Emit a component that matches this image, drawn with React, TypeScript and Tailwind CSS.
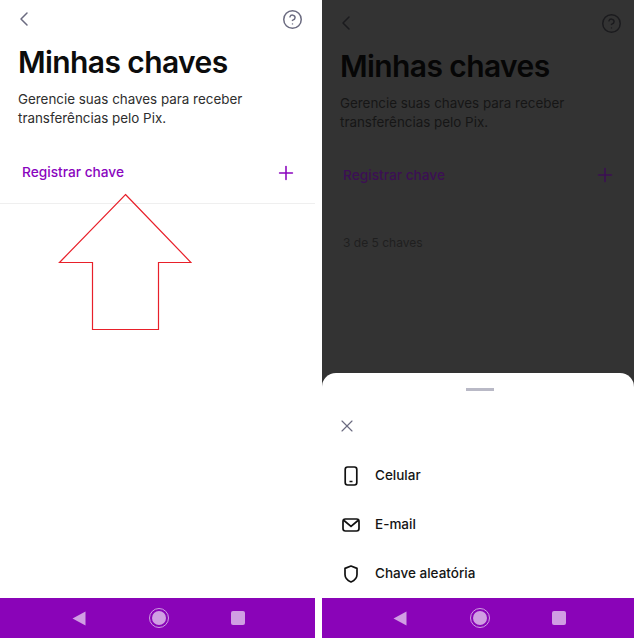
import { ChevronLeft, CircleHelp, Plus, X } from "lucide-react";

function NavBar() {
  return (
    <div className="flex h-[40px] shrink-0 items-center justify-center gap-[62px] bg-[#8a04b8] pl-[3px]">
      <svg width="14" height="15" viewBox="0 0 14 15" className="-ml-[1px] mr-[1px]">
        <path d="M13.5 0.5v14L0.5 7.5z" fill="#d09ee3" />
      </svg>
      <div className="flex size-[20px] items-center justify-center rounded-full border border-[#d09ee3]">
        <div className="size-[14px] rounded-full bg-[#d09ee3]" />
      </div>
      <div className="size-[14px] rounded-[2px] bg-[#d09ee3]" />
    </div>
  );
}

function Header({ dark }: { dark?: boolean }) {
  const icon = dark ? "#1b1b1e" : "#6b6b80";
  return (
    <div className={dark ? "px-[18px] pt-[16px]" : "px-[18px] pt-[12px]"}>
      <div className="flex h-[14px] items-center justify-between">
        <ChevronLeft size={24} strokeWidth={1.5} color={icon} className="-ml-[6px]" />
        <CircleHelp size={21} strokeWidth={1.7} color={icon} className="-mr-[6px]" />
      </div>
      <h1
        className={
          "mt-[14px] text-[30px] leading-[44px] font-semibold tracking-[-0.6px] " +
          (dark ? "text-[#060606]" : "text-[#0c0c0c]")
        }
      >
        Minhas chaves
      </h1>
      <p
        className={
          "mt-[6px] text-[13.4px] leading-[19px] " +
          (dark ? "text-[#161616]" : "text-[#2e2e2e]")
        }
      >
        Gerencie suas chaves para receber
        <br />
        transferências pelo Pix.
      </p>
    </div>
  );
}

function SheetRow({ icon, label }: { icon: React.ReactNode; label: string }) {
  return (
    <div className="flex h-[49px] items-center">
      <div className="flex w-[53px] justify-center pl-[4px]">{icon}</div>
      <span className="text-[13.5px] font-medium text-[#141414]">{label}</span>
    </div>
  );
}

export default function App() {
  return (
    <div className="relative flex h-[638px] w-[636px] bg-white font-['Inter',sans-serif]">
      {/* Left screen */}
      <div className="flex w-[315px] flex-col">
        <div className="flex-1">
          <Header />
          <div className="mt-[23px] flex h-[53px] items-center justify-between border-b border-[#efefef] pr-[18px] pb-[9px] pl-[22px]">
            <span className="text-[13.7px] font-medium text-[#8a05be]">Registrar chave</span>
            <Plus size={22} strokeWidth={1.7} color="#8a05be" />
          </div>
        </div>
        <NavBar />
      </div>

      {/* Right screen */}
      <div className="ml-[7px] flex w-[312px] flex-col">
        <div className="flex-1 overflow-hidden bg-[#333333]">
          <Header dark />
          <div className="mt-[21px] flex h-[46px] items-center justify-between pr-[18px] pb-[2px] pl-[21px]">
            <span className="text-[13.7px] font-medium text-[#3c0f54]">Registrar chave</span>
            <Plus size={22} strokeWidth={1.7} color="#3c0f54" />
          </div>
          <p className="mt-[35px] pl-[21px] text-[12px] text-[#1f1f1f]">3 de 5 chaves</p>
        </div>
        <div className="relative -mt-[16px] h-[225px] shrink-0 overflow-hidden rounded-t-[14px] bg-white">
          <div className="mt-[15px] ml-[144px] h-[3px] w-[28px] bg-[#b9b9c6]" />
          <div className="mt-[25px] pl-[15px]">
            <X size={20} strokeWidth={1.4} color="#6b6b80" />
          </div>
          <div className="mt-[15px]">
            <SheetRow
              label="Celular"
              icon={
                <svg width="14" height="20" viewBox="0 0 14 20" fill="none" stroke="#111" strokeWidth="1.7">
                  <rect x="1.2" y="1" width="11.6" height="18" rx="2.4" />
                  <path d="M5.5 15.5h3" />
                </svg>
              }
            />
            <SheetRow
              label="E-mail"
              icon={
                <svg width="18" height="14" viewBox="0 0 18 14" fill="none" stroke="#111" strokeWidth="1.7">
                  <rect x="1" y="1" width="16" height="12" rx="2.4" />
                  <path d="M2 2.5l7 6 7-6" />
                </svg>
              }
            />
            <SheetRow
              label="Chave aleatória"
              icon={
                <svg width="16" height="18" viewBox="0 0 16 18" fill="none" stroke="#111" strokeWidth="1.7" strokeLinejoin="round">
                  <path d="M8 1l6 2.4v6c0 3.4-2.6 6-6 7.6-3.4-1.6-6-4.2-6-7.6v-6z" />
                </svg>
              }
            />
          </div>
        </div>
        <NavBar />
      </div>

      {/* Red arrow annotation */}
      <svg width="134" height="138" viewBox="0 0 134 138" fill="none" className="absolute top-[193px] left-[58px]">
        <path d="M67.5 1.5L133 69.5H100.5V136.5H34.5V69.5H1.5z" stroke="#e8202a" strokeWidth="1.2" />
      </svg>
    </div>
  );
}
